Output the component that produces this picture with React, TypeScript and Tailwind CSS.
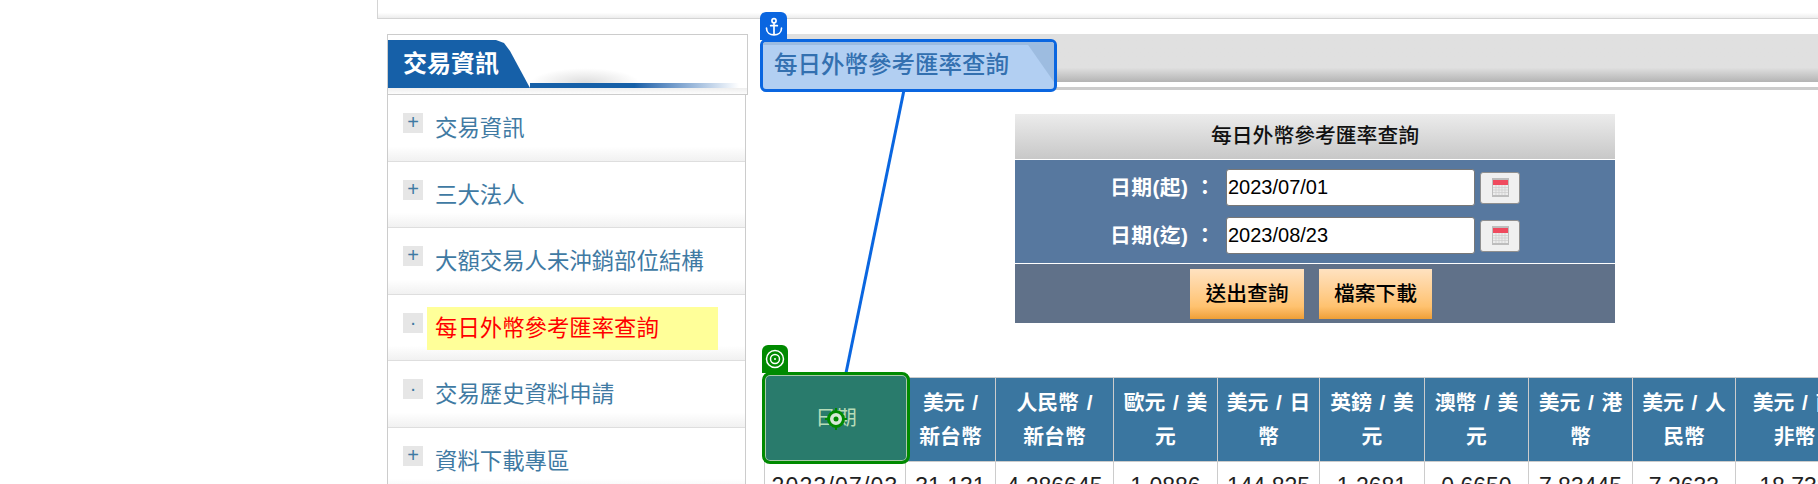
import React from "react";

const cjk = "font-['Liberation_Sans','Noto_Sans_CJK_TC',sans-serif]";

const menu = [
  { label: "交易資訊", mark: "+" },
  { label: "三大法人", mark: "+" },
  { label: "大額交易人未沖銷部位結構", mark: "+" },
  { label: "每日外幣參考匯率查詢", mark: "·", active: true },
  { label: "交易歷史資料申請", mark: "·" },
  { label: "資料下載專區", mark: "+" },
];

const cols = [
  { w: "w-[90px]", lines: ["美元 /", "新台幣"], v: "31.131" },
  { w: "w-[118px]", lines: ["人民幣 /", "新台幣"], v: "4.286645" },
  { w: "w-[104px]", lines: ["歐元 / 美", "元"], v: "1.0886" },
  { w: "w-[102px]", lines: ["美元 / 日", "幣"], v: "144.825" },
  { w: "w-[105px]", lines: ["英鎊 / 美", "元"], v: "1.2681" },
  { w: "w-[104px]", lines: ["澳幣 / 美", "元"], v: "0.6650" },
  { w: "w-[104px]", lines: ["美元 / 港", "幣"], v: "7.83445" },
  { w: "w-[103px]", lines: ["美元 / 人", "民幣"], v: "7.2633" },
  { w: "w-[118px]", lines: ["美元 / 南", "非幣"], v: "18.732" },
];

const CalendarButton = () => (
  <button className="w-[40px] h-[32px] bg-[#f0f0f0] border border-[#8f8f8f] rounded-[3px] flex items-center justify-center">
    <svg width="17" height="19" viewBox="0 0 17 19">
      <rect width="17" height="19" fill="#bdbdbd" />
      <rect x="1" y="2" width="15" height="5" fill="#ef4a5e" />
      <rect x="1" y="7" width="15" height="10" fill="#ececec" />
      <path d="M1 9.500h15M1 12h15M1 14.500h15M4 7v10M7 7v10M10 7v10M13 7v10" stroke="#cdcdcd" strokeWidth="0.7" />
    </svg>
  </button>
);

const App: React.FC = () => {
  return (
    <div className={`relative w-[1818px] h-[484px] overflow-hidden bg-white ${cjk}`}>
      {/* top strip */}
      <div className="ml-[377px] h-[19px] border-l border-b border-[#d4d4d4] bg-gradient-to-b from-white from-70% to-[#ececec]" />

      <div className="flex items-start">
        {/* side menu */}
        <aside className="ml-[387px] mt-[15px] w-[361px] shrink-0">
          <div className="relative h-[61px] border border-[#cccccc] overflow-hidden bg-white">
            <div className="absolute left-0 top-[5px] w-[142px] h-[48px] bg-[#1660a8] [clip-path:polygon(0_0,108px_0,116px_3px,122px_11px,142px_48px,0_48px)] flex items-center pl-[15px] text-[24px] font-bold text-white">
              交易資訊
            </div>
            <div className="absolute left-[142px] w-[110px] top-[33px] h-[15px] bg-[radial-gradient(ellipse_at_50%_100%,#dcdcdc,transparent_70%)]" />
            <div className="absolute left-[142px] right-[8px] top-[48px] h-[5px] bg-gradient-to-r from-[#1660a8] from-50% to-white" />
            <div className="absolute left-0 right-0 top-[53px] h-[7px] bg-gradient-to-b from-[#eeeeee] to-white" />
          </div>
          <ul className="w-[359px] border-x border-[#cccccc]">
            {menu.map((item) => (
              <li
                key={item.label}
                className="h-[66.500px] pl-[15px] flex items-start border-b border-[#dedede] bg-[linear-gradient(to_bottom,#fff_78%,#f1f1f1)]"
              >
                <span className="mt-[18px] w-5 h-5 bg-[#e6e6e6] text-[#3f7aa3] text-[20px] leading-[18px] text-center">
                  {item.mark}
                </span>
                <span
                  className={`ml-[4px] mt-[12px] h-[43px] w-[291px] pl-[8px] leading-[43px] text-[22.400px] ${
                    item.active ? "bg-[#ffff99] text-[#ff0000]" : "text-[#3f7aa3]"
                  }`}
                >
                  {item.label}
                </span>
              </li>
            ))}
          </ul>
        </aside>

        {/* main */}
        <main className="ml-[16px] flex-1 min-w-0">
          <div className="mt-[15px]">
            <div className="h-[48px] bg-gradient-to-b from-[#e0e0e0] from-70% to-[#b4b4b4]" />
            <div className="h-[5px] bg-white" />
            <div className="h-[3px] bg-[#cccccc]" />
          </div>

          {/* query form */}
          <div className="ml-[251px] mt-[24px] w-[600px] text-center">
            <div className="h-[46px] leading-[44px] bg-gradient-to-b from-[#ececec] to-[#c8c8c8] text-[20.800px] font-medium text-[#111] border-b border-white">
              每日外幣參考匯率查詢
            </div>
            <div className="h-[104px] bg-[#57789f] border-b border-white flex flex-col gap-[11px] pt-[9px]">
              {[
                { label: "日期(起) ：", v: "2023/07/01" },
                { label: "日期(迄) ：", v: "2023/08/23" },
              ].map((r) => (
                <div key={r.v} className="flex items-center h-[37px]">
                  <span className="w-[211px] pl-[95px] text-left whitespace-nowrap text-white text-[20.800px] font-bold tracking-[0.400px]">{r.label}</span>
                  <div className="w-[249px] h-[37px] bg-white border border-[#777] rounded-[3px] text-left pl-[1px] text-[20px] leading-[35px] text-black">
                    {r.v}
                  </div>
                  <span className="ml-[5px]"><CalendarButton /></span>
                </div>
              ))}
            </div>
            <div className="h-[59px] bg-[#607189] flex gap-[15px] pt-[5px] pl-[175px]">
              <button className="w-[114px] h-[50px] bg-gradient-to-b from-[#ffe2c0] via-[#ffc26f] via-75% to-[#ef9f35] text-[20.800px] font-medium text-black">送出查詢</button>
              <button className="w-[113px] h-[50px] bg-gradient-to-b from-[#ffe2c0] via-[#ffc26f] via-75% to-[#ef9f35] text-[20.800px] font-medium text-black">檔案下載</button>
            </div>
          </div>

          {/* rate table */}
          <div className="mt-[54px] flex">
            <div className="w-[142px] shrink-0 flex flex-col">
              <div className="h-[85px] bg-[#3a76a0]" />
              <div className="h-[30px] border-l border-r border-[#cccccc] text-center text-[23px] leading-[34px] pt-[7px] tracking-[1.200px] text-[#222] whitespace-nowrap overflow-hidden">
                2023/07/03
              </div>
            </div>
            {cols.map((c) => (
              <div key={c.v} className={`${c.w} shrink-0 flex flex-col`}>
                <div className="h-[85px] bg-[#3a76a0] border-t border-r border-b border-[#cccccc] text-white font-bold text-[20.800px] leading-[34px] [word-spacing:2px] text-center pt-[8px]">
                  {c.lines.map((l) => (
                    <div key={l} className="whitespace-nowrap">{l}</div>
                  ))}
                </div>
                <div className="h-[30px] border-r border-[#cccccc] text-center text-[23px] leading-[34px] pt-[7px] text-[#222] overflow-hidden">{c.v}</div>
              </div>
            ))}
          </div>
        </main>
      </div>

      {/* inspector overlays */}
      <svg className="absolute left-0 top-0 pointer-events-none" width="1818" height="484">
        <line x1="904" y1="90" x2="846" y2="373" stroke="#0a66e0" strokeWidth="3" />
      </svg>

      <div className="absolute left-[760px] top-[12px] w-[27px] h-[28px] rounded-t-[6px] bg-[#0a66e0] flex items-center justify-center text-white">
        <svg width="20" height="21" viewBox="0 0 24 24" fill="none" stroke="currentColor" strokeWidth="2" strokeLinecap="round" strokeLinejoin="round">
          <circle cx="12" cy="5" r="2.500" />
          <path d="M12 8v14M8 11h8M3 14c0 5 4 8 9 8s9-3 9-8" />
        </svg>
      </div>
      <div className="absolute left-[760px] top-[39px] w-[297px] h-[53px] rounded-[6px] border-[3px] border-[#0a66e0] bg-[#b2cff2] flex items-center pl-[11px] text-[23.500px] font-medium text-[#3370b0] overflow-hidden">
        <div className="absolute left-0 right-0 top-0 h-[3px] bg-[#9dbce0]" />
        每日外幣參考匯率查詢
        <div className="absolute right-0 top-0 h-[40px] w-[28px] bg-[#9dbce0] [clip-path:polygon(0_0,100%_100%,100%_0)]" />
      </div>

      <div className="absolute left-[762px] top-[345px] w-[26px] h-[28px] rounded-t-[6px] bg-[#008a00] flex items-center justify-center text-white">
        <svg width="20" height="20" viewBox="0 0 20 20" fill="none" stroke="currentColor" strokeWidth="1.500">
          <circle cx="10" cy="10" r="8.500" />
          <circle cx="10" cy="10" r="4.500" />
          <circle cx="10" cy="10" r="1" fill="currentColor" stroke="none" />
        </svg>
      </div>
      <div className="absolute left-[762px] top-[372px] w-[148px] h-[92px] rounded-[8px] border-[3px] border-[#008a00] bg-[#297b6c] flex items-center justify-center text-[20.800px] text-[#b7dcb7] shadow-[inset_0_0_0_1px_#a9c9a9]">
        日期
        <svg className="absolute left-[59px] top-[32px]" width="24" height="24" viewBox="0 0 24 24">
          <circle cx="12" cy="12" r="7.500" fill="#d7e8d7" stroke="#008a00" strokeWidth="3" />
          <circle cx="12" cy="12" r="2.500" fill="#008a00" />
          <path d="M12 1v3M12 20v3M1 12h3M20 12h3" stroke="#008a00" strokeWidth="2" />
        </svg>
      </div>
    </div>
  );
};

export default App;
